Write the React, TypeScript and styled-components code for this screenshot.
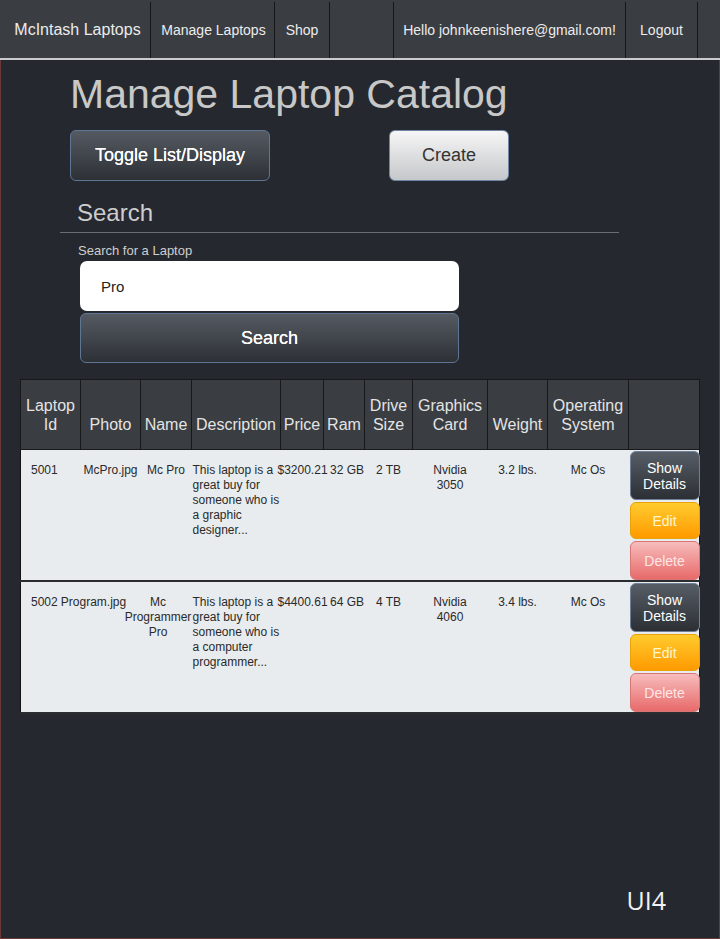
import React from "react";
import styled, { createGlobalStyle, css } from "styled-components";

const Global = createGlobalStyle`
  html, body { margin: 0; padding: 0; background: #25282e; }
  body { font-family: "Liberation Sans", Arial, sans-serif; }
  * { box-sizing: border-box; }
`;

const Frame = styled.div`
  width: 720px;
  min-height: 939px;
  display: flex;
  flex-direction: column;
  background: #25282e;
  border: 1px solid #6a3838;
  border-top: none;
`;

const Nav = styled.nav`
  display: flex;
  height: 60px;
  padding-top: 2px;
  background: #3a3d42;
  border-bottom: 2px solid #c9cbcd;
  margin: 0 -1px;
`;

const NavCell = styled.div<{ $w: number; $size?: number; $pad?: number; $last?: boolean }>`
  width: ${(p) => p.$w}px;
  flex: none;
  display: flex;
  align-items: center;
  justify-content: center;
  padding-left: ${(p) => p.$pad ?? 0}px;
  color: #ececec;
  font-size: ${(p) => p.$size ?? 14}px;
  white-space: nowrap;
  border-right: ${(p) => (p.$last ? "none" : "1px solid #151618")};
`;

const Main = styled.main`
  flex: 1;
  display: flex;
  flex-direction: column;
`;

const Title = styled.h1`
  margin: 11px 0 0 69px;
  font-size: 41px;
  font-weight: normal;
  line-height: 47px;
  color: #c8c8c8;
`;

const ButtonRow = styled.div`
  display: flex;
  gap: 119px;
  margin: 12px 0 0 69px;
`;

const BigButton = styled.button<{ $light?: boolean; $w: number }>`
  width: ${(p) => p.$w}px;
  height: 51px;
  border-radius: 6px;
  font-family: "Liberation Sans", Arial, sans-serif;
  font-size: 18px;
  cursor: pointer;
  ${(p) =>
    p.$light
      ? css`
          background: linear-gradient(#f6f6f6, #c5c7ca);
          border: 1px solid #6f86a6;
          color: #333;
        `
      : css`
          background: linear-gradient(#555a62, #2d3136);
          border: 1px solid #5f7594;
          color: #fff;
          text-shadow: 0 0 0.5px #fff;
        `}
`;

const SearchSection = styled.section`
  margin: 18px 0 0 59px;
  width: 559px;
  display: flex;
  flex-direction: column;
`;

const SectionHeading = styled.h2`
  margin: 0;
  padding: 0 0 5px 17px;
  font-size: 24px;
  font-weight: normal;
  line-height: 28px;
  color: #cdcdcd;
  border-bottom: 1px solid #6b6d70;
`;

const Label = styled.label`
  margin: 10px 0 0 18px;
  font-size: 13px;
  line-height: 15px;
  color: #cfcfcf;
`;

const Input = styled.input`
  margin: 3px 0 0 20px;
  width: 379px;
  height: 50px;
  border: none;
  border-radius: 7px;
  background: #fff;
  padding: 0 0 0 21px;
  font-family: "Liberation Sans", Arial, sans-serif;
  font-size: 15px;
  color: #222;
  outline: none;
`;

const SearchButton = styled(BigButton)`
  margin: 2px 0 0 20px;
  height: 50px;
`;

const Table = styled.table`
  margin: 16px 0 0 19px;
  width: 679px;
  border-collapse: collapse;
  table-layout: fixed;
  border: 1px solid #111;
`;

const Th = styled.th`
  height: 70px;
  background: #3a3d42;
  color: #e4e4e4;
  font-size: 16px;
  font-weight: normal;
  line-height: 19px;
  text-align: center;
  vertical-align: bottom;
  padding: 0 0 15px 0;
  border: 1px solid #17181a;
`;

const Tr = styled.tr`
  background: #e8ecef;
  border-bottom: 2px solid #2a2c30;
`;

const Td = styled.td<{ $align?: "left" | "center"; $pad?: number }>`
  height: 131px;
  vertical-align: top;
  text-align: ${(p) => p.$align ?? "center"};
  padding: 13px 0 0 ${(p) => p.$pad ?? 0}px;
  font-size: 12px;
  line-height: 15px;
  color: #2a2a2a;
`;

const Shifted = styled.div<{ $shift?: number }>`
  margin-left: ${(p) => p.$shift ?? 0}px;
  white-space: nowrap;
`;

const Wrap = styled.div<{ $shift?: number; $w?: number }>`
  margin-left: ${(p) => p.$shift ?? 0}px;
  width: ${(p) => (p.$w ? `${p.$w}px` : "auto")};
`;

const ActionTd = styled.td`
  vertical-align: top;
  padding: 1px 0 0 1px;
`;

const Actions = styled.div`
  display: flex;
  flex-direction: column;
  gap: 2px;
`;

const ActionButton = styled.button<{ $kind: "show" | "edit" | "delete" }>`
  width: 70px;
  border-radius: 6px;
  font-family: "Liberation Sans", Arial, sans-serif;
  font-size: 14px;
  line-height: 16px;
  padding: 0;
  cursor: pointer;
  ${(p) =>
    p.$kind === "show"
      ? css`
          height: 49px;
          background: linear-gradient(#575d66, #2c3035);
          border: 1px solid #6e7f98;
          color: #fff;
        `
      : p.$kind === "edit"
      ? css`
          height: 37px;
          background: linear-gradient(#ffcb2e, #ff9a00);
          border: 1px solid #e9a20a;
          color: #fff6d2;
        `
      : css`
          height: 39px;
          background: linear-gradient(#f7bcbc, #e86a6a);
          border: 1px solid #d87676;
          color: #ffe6e6;
        `}
`;

const Footer = styled.div`
  display: flex;
  justify-content: flex-end;
  padding: 0 53px 21px 0;
  font-family: "Open Sans", "Liberation Sans", sans-serif;
  font-size: 25px;
  color: #f2f2f2;
`;

type Laptop = {
  id: string;
  photo: string;
  photoShift: number;
  name: string;
  nameShift: number;
  desc: string;
  price: string;
  ram: string;
  drive: string;
  gpu: string[];
  weight: string;
  os: string;
};

const laptops: Laptop[] = [
  {
    id: "5001",
    photo: "McPro.jpg",
    photoShift: 0,
    name: "Mc Pro",
    nameShift: 0,
    desc: "This laptop is a great buy for someone who is a graphic designer...",
    price: "$3200.21",
    ram: "32 GB",
    drive: "2 TB",
    gpu: ["Nvidia", "3050"],
    weight: "3.2 lbs.",
    os: "Mc Os",
  },
  {
    id: "5002",
    photo: "Program.jpg",
    photoShift: -34,
    name: "Mc Programmer Pro",
    nameShift: -16,
    desc: "This laptop is a great buy for someone who is a computer programmer...",
    price: "$4400.61",
    ram: "64 GB",
    drive: "4 TB",
    gpu: ["Nvidia", "4060"],
    weight: "3.4 lbs.",
    os: "Mc Os",
  },
];

const cols = [60, 60, 51, 89, 43, 41, 48, 75, 60, 81, 71];

export default function App() {
  return (
    <>
      <Global />
      <Frame>
        <Nav>
          <NavCell $w={151} $size={16} $pad={5}>
            McIntash Laptops
          </NavCell>
          <NavCell $w={124} $pad={2}>
            Manage Laptops
          </NavCell>
          <NavCell $w={55}>Shop</NavCell>
          <NavCell $w={64}></NavCell>
          <NavCell $w={232}>Hello johnkeenishere@gmail.com!</NavCell>
          <NavCell $w={72}>Logout</NavCell>
          <NavCell $w={22} $last></NavCell>
        </Nav>
        <Main>
          <Title>Manage Laptop Catalog</Title>
          <ButtonRow>
            <BigButton $w={200}>Toggle List/Display</BigButton>
            <BigButton $w={120} $light>
              Create
            </BigButton>
          </ButtonRow>
          <SearchSection>
            <SectionHeading>Search</SectionHeading>
            <Label htmlFor="q">Search for a Laptop</Label>
            <Input id="q" defaultValue="Pro" />
            <SearchButton $w={379}>Search</SearchButton>
          </SearchSection>
          <Table>
            <colgroup>
              {cols.map((w, i) => (
                <col key={i} style={{ width: w }} />
              ))}
            </colgroup>
            <thead>
              <tr>
                <Th>
                  Laptop
                  <br />
                  Id
                </Th>
                <Th>Photo</Th>
                <Th>Name</Th>
                <Th>Description</Th>
                <Th>Price</Th>
                <Th>Ram</Th>
                <Th>
                  Drive
                  <br />
                  Size
                </Th>
                <Th>
                  Graphics
                  <br />
                  Card
                </Th>
                <Th>Weight</Th>
                <Th>
                  Operating
                  <br />
                  System
                </Th>
                <Th></Th>
              </tr>
            </thead>
            <tbody>
              {laptops.map((l) => (
                <Tr key={l.id}>
                  <Td $align="left" $pad={10}>
                    {l.id}
                  </Td>
                  <Td>
                    <Shifted $shift={l.photoShift}>{l.photo}</Shifted>
                  </Td>
                  <Td>
                    <Wrap $shift={l.nameShift} $w={l.nameShift ? 67 : undefined}>
                      {l.name}
                    </Wrap>
                  </Td>
                  <Td $align="left" $pad={1}>
                    {l.desc}
                  </Td>
                  <Td>
                    <Shifted $shift={-3}>{l.price}</Shifted>
                  </Td>
                  <Td>
                    <Shifted $shift={6}>{l.ram}</Shifted>
                  </Td>
                  <Td>{l.drive}</Td>
                  <Td>
                    {l.gpu[0]}
                    <br />
                    {l.gpu[1]}
                  </Td>
                  <Td>{l.weight}</Td>
                  <Td>{l.os}</Td>
                  <ActionTd>
                    <Actions>
                      <ActionButton $kind="show">
                        Show
                        <br />
                        Details
                      </ActionButton>
                      <ActionButton $kind="edit">Edit</ActionButton>
                      <ActionButton $kind="delete">Delete</ActionButton>
                    </Actions>
                  </ActionTd>
                </Tr>
              ))}
            </tbody>
          </Table>
        </Main>
        <Footer>UI4</Footer>
      </Frame>
    </>
  );
}
